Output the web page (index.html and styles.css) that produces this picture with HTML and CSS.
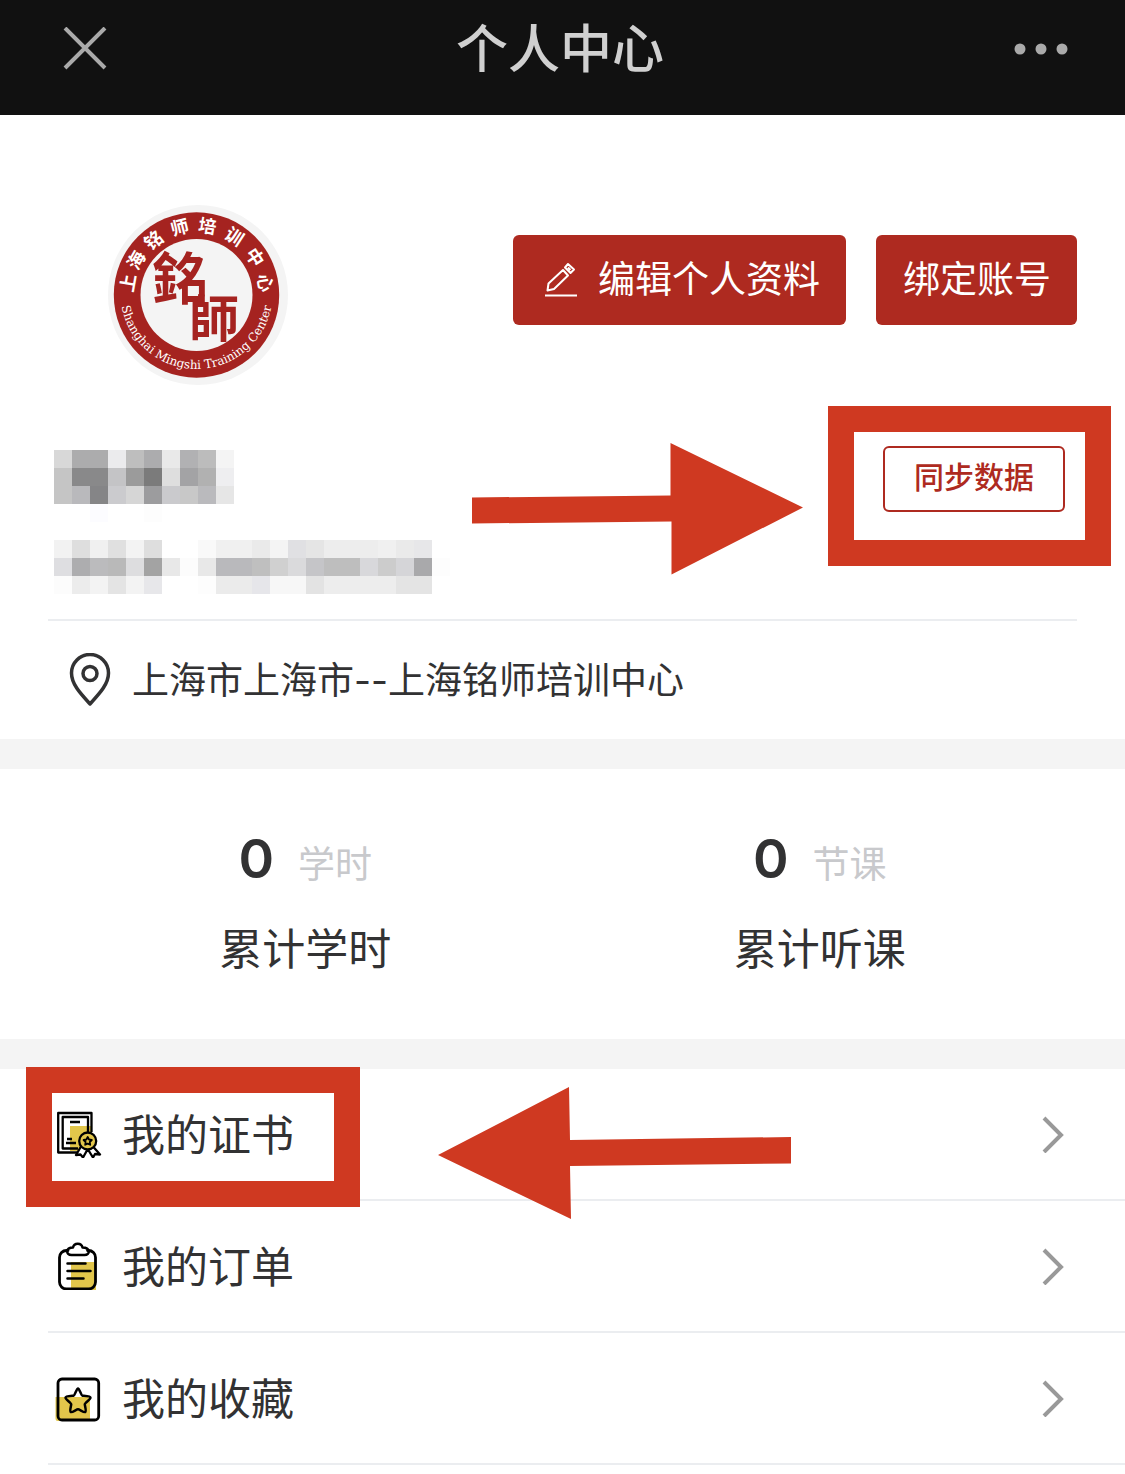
FILE: index.html
```html
<!DOCTYPE html>
<html lang="zh-CN">
<head>
  <meta charset="UTF-8" />
  <meta name="viewport" content="width=device-width, initial-scale=1.0"/>
  <title>个人中心</title>
  <link rel="stylesheet" href="styles.css">
</head>
<body>
  <header class="topbar">
    <button class="icon-btn close" type="button" aria-label="关闭">
      <svg width="44" height="44" viewBox="0 0 44 44"><path d="M2 1l40 40M42 1L2 41" stroke="#aaa" stroke-width="4" fill="none"/></svg>
    </button>
    <h1>个人中心</h1>
    <button class="icon-btn more" type="button" aria-label="更多">
      <svg width="54" height="12" viewBox="0 0 54 12" fill="#aaa"><circle cx="6" cy="6" r="5.5"/><circle cx="27" cy="6" r="5.5"/><circle cx="48" cy="6" r="5.5"/></svg>
    </button>
  </header>

  <section class="profile">
    <div class="profile-top">
      <svg class="avatar" viewBox="0 0 180 180" role="img" aria-label="上海铭师培训中心">
        <defs><path id="ring" d="M12.5 88a76 76 0 0 0 152 0"/></defs>
        <circle cx="90" cy="90" r="90" fill="#f4f4f4"/>
        <circle cx="88.5" cy="90" r="82.7" fill="#a52320"/>
        <circle cx="88.5" cy="90" r="56" fill="#f4f4f4"/>
        <g class="ring-cn">
          <text x="88.5" y="27" transform="rotate(-80 88.5 90)">上</text>
          <text x="88.5" y="27" transform="rotate(-60 88.5 90)">海</text>
          <text x="88.5" y="27" transform="rotate(-38 88.5 90)">铭</text>
          <text x="88.5" y="27" transform="rotate(-14 88.5 90)">师</text>
          <text x="88.5" y="27" transform="rotate(9 88.5 90)">培</text>
          <text x="88.5" y="27" transform="rotate(33 88.5 90)">训</text>
          <text x="88.5" y="27" transform="rotate(57 88.5 90)">中</text>
          <text x="88.5" y="27" transform="rotate(80 88.5 90)">心</text>
        </g>
        <text class="ring-en"><textPath href="#ring" startOffset="50%">Shanghai Mingshi Training Center</textPath></text>
        <text class="seal" x="72" y="94">銘</text>
        <text class="seal seal-small" x="106" y="132">師</text>
      </svg>
      <div class="actions">
        <button class="btn" type="button">
          <svg width="34" height="36" viewBox="0 0 34 36" fill="none" stroke="#fff" stroke-width="2" stroke-linejoin="round"><path d="M1 33.500h32M3.500 28.500l1-7L19 8l5 5.500L10 27zM21 5.500l3-3.500 6 5.500-3.500 3.500zM24 5.500l2.500 2.500"/></svg>
          <span>编辑个人资料</span>
        </button>
        <button class="btn" type="button">绑定账号</button>
      </div>
    </div>

    <div class="identity">
      <div class="masked">
        <svg width="180" height="72" viewBox="0 0 10 4" shape-rendering="crispEdges" aria-hidden="true">
          <rect width="1" height="1" fill="#d8d8d8"/><rect x="1" width="2" height="1" fill="#acacad"/><rect x="3" width="1" height="1" fill="#ebebed"/><rect x="4" width="1" height="1" fill="#bebebe"/><rect x="5" width="1" height="1" fill="#acacae"/><rect x="6" width="1" height="1" fill="#e9e9e9"/><rect x="7" width="1" height="1" fill="#b1b1b3"/><rect x="8" width="1" height="1" fill="#bcbcbc"/><rect x="9" width="1" height="1" fill="#f4f4f4"/>
          <rect y="1" width="1" height="2" fill="#c5c5c5"/><rect x="1" y="1" width="2" height="1" fill="#89898a"/><rect x="3" y="1" width="1" height="1" fill="#c4c4c6"/><rect x="4" y="1" width="1" height="1" fill="#9b9b9b"/><rect x="5" y="1" width="1" height="1" fill="#7b7b7b"/><rect x="6" y="1" width="1" height="1" fill="#dedede"/><rect x="7" y="1" width="1" height="1" fill="#a3a3a5"/><rect x="8" y="1" width="1" height="1" fill="#b1b1b1"/><rect x="9" y="1" width="1" height="1" fill="#eeeef0"/>
          <rect x="1" y="2" width="1" height="1" fill="#b9b9bc"/><rect x="2" y="2" width="1" height="1" fill="#858587"/><rect x="3" y="2" width="1" height="1" fill="#cbcbce"/><rect x="4" y="2" width="1" height="1" fill="#d6d6d6"/><rect x="5" y="2" width="1" height="1" fill="#9c9c9e"/><rect x="6" y="2" width="1" height="1" fill="#cacacd"/><rect x="7" y="2" width="1" height="1" fill="#c8c8c8"/><rect x="8" y="2" width="1" height="1" fill="#bababd"/><rect x="9" y="2" width="1" height="1" fill="#e6e6e6"/>
          <rect x="2" y="3" width="1" height="1" fill="#fcfcff"/><rect x="5" y="3" width="1" height="1" fill="#fdfdfd"/>
        </svg>
        <svg width="396" height="54" viewBox="0 0 22 3" shape-rendering="crispEdges" aria-hidden="true">
          <rect width="1" height="1" fill="#f2f2f2"/><rect x="1" width="1" height="1" fill="#dedede"/><rect x="2" width="1" height="1" fill="#f0f0f0"/><rect x="3" width="1" height="1" fill="#e0e0e0"/><rect x="4" width="1" height="1" fill="#f3f3f3"/><rect x="5" width="1" height="1" fill="#dedede"/><rect x="8" width="1" height="1" fill="#f9f9f9"/><rect x="9" width="2" height="1" fill="#f0f0f0"/><rect x="11" width="1" height="1" fill="#eaeaea"/><rect x="12" width="1" height="1" fill="#f4f4f4"/><rect x="13" width="1" height="1" fill="#e0e0e3"/><rect x="14" width="1" height="1" fill="#e5e5e5"/><rect x="15" width="3" height="1" fill="#ededed"/><rect x="18" width="1" height="1" fill="#f0f0f0"/><rect x="19" width="1" height="1" fill="#eaeaea"/><rect x="20" width="1" height="1" fill="#e7e7e9"/>
          <rect y="1" width="1" height="1" fill="#dedee1"/><rect x="1" y="1" width="1" height="1" fill="#adadaf"/><rect x="2" y="1" width="1" height="1" fill="#bbbbbd"/><rect x="3" y="1" width="1" height="1" fill="#b9b9b9"/><rect x="4" y="1" width="1" height="1" fill="#dddddf"/><rect x="5" y="1" width="1" height="1" fill="#a3a3a3"/><rect x="6" y="1" width="1" height="1" fill="#e8e8e8"/><rect x="7" y="1" width="1" height="1" fill="#fcfcfc"/><rect x="8" y="1" width="1" height="1" fill="#e8e8e8"/><rect x="9" y="1" width="2" height="1" fill="#b9b9bc"/><rect x="11" y="1" width="1" height="1" fill="#bfbfbf"/><rect x="12" y="1" width="1" height="1" fill="#d0d0d0"/><rect x="13" y="1" width="1" height="1" fill="#dadadc"/><rect x="14" y="1" width="1" height="1" fill="#c5c5c8"/><rect x="15" y="1" width="2" height="1" fill="#bebebe"/><rect x="17" y="1" width="1" height="1" fill="#d8d8db"/><rect x="18" y="1" width="1" height="1" fill="#cccccc"/><rect x="19" y="1" width="1" height="1" fill="#d5d5d8"/><rect x="20" y="1" width="1" height="1" fill="#a9a9ab"/><rect x="21" y="1" width="1" height="1" fill="#fdfdfd"/>
          <rect y="2" width="1" height="1" fill="#fcfcfc"/><rect x="1" y="2" width="1" height="1" fill="#ececec"/><rect x="2" y="2" width="1" height="1" fill="#f3f3f3"/><rect x="3" y="2" width="1" height="1" fill="#e4e4e4"/><rect x="4" y="2" width="1" height="1" fill="#f3f3f3"/><rect x="5" y="2" width="1" height="1" fill="#e7e7ea"/><rect x="8" y="2" width="1" height="1" fill="#fdfdfd"/><rect x="9" y="2" width="2" height="1" fill="#ebebeb"/><rect x="11" y="2" width="1" height="1" fill="#e6e6ea"/><rect x="12" y="2" width="2" height="1" fill="#f7f7f7"/><rect x="14" y="2" width="1" height="1" fill="#e3e3e3"/><rect x="15" y="2" width="4" height="1" fill="#ededed"/><rect x="19" y="2" width="2" height="1" fill="#e4e4e4"/>
        </svg>
      </div>
      <div class="sync">
        <button class="btn-outline" type="button">同步数据</button>
        <div class="mark mark-sync"></div>
        <svg class="arrow arrow-sync" width="332" height="134" viewBox="0 0 332 134"><path d="M331 65.500L198.500 1v52.500L0 55.500v26l199.500-2v53z"/></svg>
      </div>
    </div>

    <div class="location">
      <svg width="42" height="54" viewBox="0 0 42 54" fill="none" stroke="#323233" stroke-width="3.500" stroke-linejoin="round"><path d="M21 51C11 40 2.500 31 2.500 20a18.500 18.500 0 0 1 37 0C39.500 31 31 40 21 51z"/><circle cx="21" cy="20.500" r="7"/></svg>
      <span>上海市上海市--上海铭师培训中心</span>
    </div>
  </section>

  <section class="stats">
    <div class="stat">
      <div class="stat-value"><strong>0</strong><span>学时</span></div>
      <div class="stat-label">累计学时</div>
    </div>
    <div class="stat">
      <div class="stat-value"><strong>0</strong><span>节课</span></div>
      <div class="stat-label">累计听课</div>
    </div>
  </section>

  <nav class="menu">
    <a class="menu-item" href="#certificates">
      <svg width="48" height="48" viewBox="0 0 48 48" fill="none" stroke="#000" stroke-width="2.300" stroke-linejoin="round">
        <path d="M16 16h22v25H16z" fill="#e2c64b" stroke="none"/>
        <path d="M24 42.500H4.200V3h33.300V22"/>
        <path d="M24 38.500H8.700V7H34V22M16 12h10M13 29h5M12 33h10"/>
        <path d="M27 36.500l-5 8.500 4.500-.500 2.500 3 4.500-8M39 36.500l7 8-5-.500-2 3.500-5-8" fill="#fff"/>
        <circle cx="33.700" cy="31" r="8.500" fill="#e2c64b"/>
        <path d="M33.700 27l1.300 2.500 2.800.500-2 2 .400 2.800-2.500-1.200-2.500 1.200.400-2.800-2-2 2.800-.500z" stroke-width="1.800"/>
      </svg>
      <span>我的证书</span>
      <svg class="chevron" width="22" height="38" viewBox="0 0 22 38"><path d="M2 3l17 17L2 37"/></svg>
      <span class="mark mark-cert"></span>
      <svg class="arrow arrow-cert" width="354" height="134" viewBox="0 0 354 134"><path d="M0 68L131 0l1 53 221-3v26.500L132 79l1 53z"/></svg>
    </a>
    <a class="menu-item" href="#orders">
      <svg width="48" height="48" viewBox="0 0 48 48" fill="none" stroke="#000" stroke-width="2.800" stroke-linecap="round" stroke-linejoin="round">
        <path d="M17 20h25v28H17z" fill="#e2c64b" stroke="none"/>
        <path d="M14 8.500h-1.500a7 7 0 0 0-7 7v24.500a7 7 0 0 0 7 7H34.500a7 7 0 0 0 7-7V15.500a7 7 0 0 0-7-7h-1"/>
        <path d="M19 5.500c1-5 8.500-5 9.500 0 8 0 8 7.500 2 7.500H17.500c-6 0-6-7.500 1.500-7.500zM13.500 21.500h18M13.500 29h23M13.500 36.500h16" stroke-width="2.500"/>
      </svg>
      <span>我的订单</span>
      <svg class="chevron" width="22" height="38" viewBox="0 0 22 38"><path d="M2 3l17 17L2 37"/></svg>
    </a>
    <a class="menu-item" href="#favorites">
      <svg width="48" height="48" viewBox="0 0 48 48" fill="none" stroke="#000" stroke-width="2.800" stroke-linejoin="round">
        <path d="M1.500 23H36v24H4a2.500 2.500 0 0 1-2.500-2.500z" fill="#e2c64b" stroke="none"/>
        <rect x="4" y="5" width="40.700" height="41" rx="4"/>
        <path d="M24 14.500c1.500 0 3 7 4.500 7.200s8 .300 8 2S30.800 28.800 30.800 30.300s1.700 6.700.500 7.700-5.800-2.700-7.300-2.700-6.100 3.700-7.300 2.700.5-6.200.5-7.700-5.700-4.900-5.700-6.600 6.500-1.800 8-2 3-7.200 4.500-7.200z" stroke-width="2.500"/>
      </svg>
      <span>我的收藏</span>
      <svg class="chevron" width="22" height="38" viewBox="0 0 22 38"><path d="M2 3l17 17L2 37"/></svg>
    </a>
  </nav>
</body>
</html>
```
FILE: styles.css
```css
* {
  box-sizing: border-box;
}

body {
  margin: 0;
  padding: 0;
  font-family: "Noto Sans CJK SC", sans-serif;
  background-color: #fff;
  color: #323233;
}

svg {
  display: block;
  flex-shrink: 0;
}

button {
  font-family: inherit;
  cursor: pointer;
}

.topbar {
  display: grid;
  grid-template-columns: 1fr auto 1fr;
  align-items: center;
  height: 115px;
  padding: 0 57px 18px 52px;
  background-color: #111;
}

.topbar h1 {
  margin: 0;
  padding-bottom: 6px;
  font-size: 52px;
  font-weight: 500;
  line-height: 76px;
  color: #d0d0d0;
}

.icon-btn {
  padding: 0;
  border: none;
  background: none;
}

.close {
  justify-self: start;
  margin-left: 11px;
}

.more {
  justify-self: end;
}

.profile {
  padding: 90px 48px 0;
}

.profile-top {
  display: flex;
  justify-content: space-between;
  padding-left: 60px;
}

.avatar {
  width: 180px;
  height: 180px;
}

.ring-cn {
  font-size: 18px;
  font-weight: 700;
  fill: #fff;
  text-anchor: middle;
}

.ring-en {
  font-family: "DejaVu Serif", serif;
  font-size: 12px;
  fill: #fff;
  text-anchor: middle;
}

.seal {
  font-family: "Noto Sans CJK TC", sans-serif;
  font-size: 56px;
  font-weight: 700;
  fill: #a52320;
  text-anchor: middle;
}

.seal-small {
  font-size: 50px;
}

.actions {
  display: flex;
  gap: 30px;
  padding-top: 30px;
}

.btn {
  display: flex;
  align-items: center;
  gap: 20px;
  height: 90px;
  padding: 0 26px 7px 27px;
  border: none;
  border-radius: 6px;
  background-color: #ae2a20;
  color: #fff;
  font-size: 37px;
}

.btn svg {
  margin: 6px 0 0 4px;
}

.identity {
  display: flex;
  justify-content: space-between;
  align-items: flex-start;
  margin-top: 61px;
  padding: 0 12px 25px 6px;
  border-bottom: 2px solid #ebedf0;
}

.masked {
  display: flex;
  flex-direction: column;
  gap: 18px;
  padding-top: 4px;
}

.sync {
  position: relative;
}

.btn-outline {
  height: 66px;
  padding: 0 29px 8px;
  border: 2px solid #ae2a20;
  border-radius: 6px;
  background-color: #fff;
  color: #ae2a20;
  font-size: 30px;
  font-weight: 500;
}

/* red call-outs drawn over the page */
.mark {
  position: absolute;
  border: 26px solid #cf3921;
  pointer-events: none;
}

.mark-sync {
  top: -40px;
  right: -46px;
  width: 283px;
  height: 160px;
}

.arrow {
  position: absolute;
  fill: #cf3921;
  pointer-events: none;
}

.arrow-sync {
  top: -4px;
  right: 261px;
}

.location {
  display: flex;
  align-items: center;
  gap: 21px;
  height: 118px;
  padding-left: 21px;
  font-family: Inter, "Noto Sans CJK SC", sans-serif;
  font-size: 37px;
}

.location span {
  padding-bottom: 5px;
}

.stats {
  display: grid;
  grid-template-columns: 1fr 1fr;
  padding: 52px 48px 60px;
  border-top: 30px solid #f4f4f4;
  border-bottom: 30px solid #f4f4f4;
}

.stat {
  text-align: center;
}

.stat-value {
  display: flex;
  justify-content: center;
  align-items: baseline;
  gap: 24px;
  height: 92px;
  line-height: 76px;
}

.stat-value strong {
  font-family: Inter, sans-serif;
  font-size: 54px;
  font-weight: 600;
}

.stat-value span {
  font-size: 37px;
  color: #c8c9cc;
}

.stat-label {
  font-size: 43px;
  line-height: 66px;
}

.menu-item {
  position: relative;
  display: flex;
  align-items: center;
  gap: 20px;
  height: 132px;
  margin-left: 48px;
  padding: 0 61px 0 6px;
  border-bottom: 2px solid #ebedf0;
  color: inherit;
  font-size: 43px;
  text-decoration: none;
}

.menu-item span {
  padding-bottom: 5px;
}

.chevron {
  margin-left: auto;
  fill: none;
  stroke: #999;
  stroke-width: 4;
}

.mark-cert {
  top: -2px;
  left: -22px;
  width: 334px;
  height: 140px;
  z-index: 1;
}

.arrow-cert {
  top: 18px;
  left: 390px;
  z-index: 1;
}
```
